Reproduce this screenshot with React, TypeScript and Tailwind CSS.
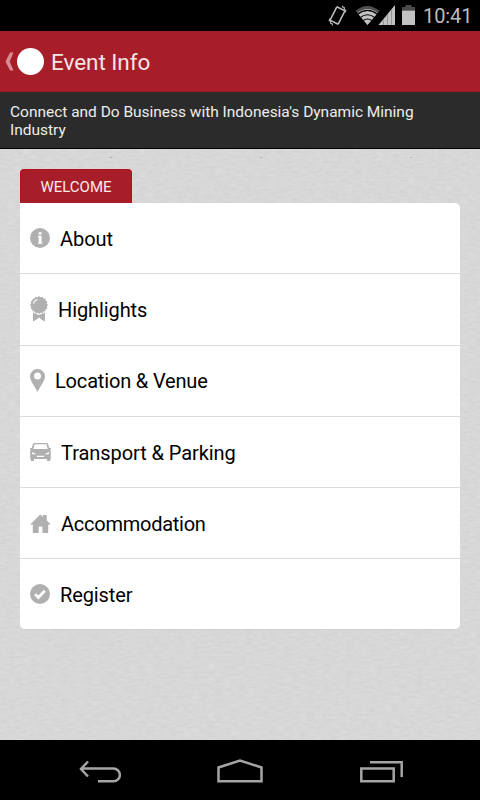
import React from 'react';

const badge = Array.from({ length: 32 }, (_, i) => {
  const a = (i * Math.PI) / 16;
  const r = i % 2 ? 7.9 : 9;
  return `${(9 + r * Math.sin(a)).toFixed(2)},${(9 - r * Math.cos(a)).toFixed(2)}`;
}).join(' ');

const InfoIcon = () => (
  <svg width="20" height="20" viewBox="0 0 20 20">
    <circle cx="10" cy="10" r="10" fill="#b0b0b0" />
    <path d="M8.600 4.200h3v2.400h-3zM8 7.700h3.600v6.800h.7v1.300H8v-1.300h.700V9H8z" fill="#fff" />
  </svg>
);
const BadgeIcon = () => (
  <svg width="18" height="26" viewBox="0 0 18 26">
    <polygon points={badge} fill="#b0b0b0" />
    <path d="M3.400 7.600A6 6 0 0 1 7.600 3.300" fill="none" stroke="#f4f4f4" strokeWidth="1.200" />
    <path d="M3 16.600 9 19l6-2.400v8.900l-2.900-1.500L9 21.500 5.900 24 3 25.500z" fill="#b0b0b0" />
  </svg>
);
const PinIcon = () => (
  <svg width="15" height="23" viewBox="0 0 15 23">
    <path fillRule="evenodd" d="M7.5 0A7.4 7.4 0 0 1 15 7.4C15 11 12 14.3 7.5 23 3 14.3 0 11 0 7.4A7.4 7.4 0 0 1 7.5 0zm0 3.600a3.500 3.500 0 1 0 0 7 3.500 3.500 0 0 0 0-7z" fill="#b0b0b0" />
  </svg>
);
const CarIcon = () => (
  <svg width="21" height="18" viewBox="0 0 21 18">
    <path fillRule="evenodd" d="M4.600 0h11.800q1.300 0 1.800 1.400L19.300 5H21v1.500h-1.100q.9 1 .9 2.400V16h-.6v2h-3.200v-2H4v2H.8v-2H.2V8.900q0-1.400.9-2.400H0V5h1.700l1.100-3.600Q3.300 0 4.600 0zM4.600 1.300 3.300 6h14.400l-1.300-4.700zM2 9.300v1.600l3.400.7v-1.200zm17 0-3.400 1.100v1.200l3.400-.7zM6.800 12.800v1.300h7.400v-1.300z" fill="#b0b0b0" />
  </svg>
);
const HomeIcon = () => (
  <svg width="21" height="19" viewBox="0 0 21 19">
    <path d="M10.300.6 13 3V.9h3.700v5.400l4 4.100h-2.500V19h-5.800v-6.500H8.700V19H2.800v-8.600H.2z" fill="#b0b0b0" />
  </svg>
);
const CheckIcon = () => (
  <svg width="20" height="20" viewBox="0 0 20 20">
    <circle cx="10" cy="10" r="10" fill="#b0b0b0" />
    <path d="m5.200 10.300 3.200 3.200 6.400-6.700" fill="none" stroke="#fff" strokeWidth="2.800" />
  </svg>
);

const rows = [
  { label: 'About', icon: <InfoIcon />, spacing: 'gap-[10px] tracking-[-0.050px]' },
  { label: 'Highlights', icon: <BadgeIcon />, spacing: 'gap-[10px] pb-[2px] tracking-[-0.100px]' },
  { label: 'Location & Venue', icon: <PinIcon />, spacing: 'gap-[10px] pb-[2px] tracking-[-0.170px]' },
  { label: 'Transport & Parking', icon: <CarIcon />, spacing: 'gap-[10px] tracking-[-0.070px]' },
  { label: 'Accommodation', icon: <HomeIcon />, spacing: 'gap-[10px] tracking-[-0.250px]' },
  { label: 'Register', icon: <CheckIcon />, spacing: 'gap-[10px] tracking-[-0.100px]' },
];

function PaperTexture() {
  return (
    <svg className="absolute inset-0 h-full w-full" aria-hidden="true">
      <filter id="paper" x="0" y="0" width="100%" height="100%" colorInterpolationFilters="sRGB">
        <feTurbulence type="fractalNoise" baseFrequency="0.13 0.4" numOctaves="3" seed="4" />
        <feColorMatrix values="0.055 0 0 0 0.817  0.055 0 0 0 0.817  0.055 0 0 0 0.817  0 0 0 0 1" />
      </filter>
      <rect width="100%" height="100%" filter="url(#paper)" />
      <path d="M110 8.500h2M260 8.500h2M410 8.500h2" stroke="#b2b2b2" strokeWidth="1" />
    </svg>
  );
}

function StatusBar() {
  return (
    <div className="flex h-[31px] shrink-0 items-center bg-black pl-[328px]">
      <svg width="92" height="31" viewBox="328 0 92 31" className="shrink-0">
        <g fill="none" stroke="#bcbcbc">
          <rect x="-4.500" y="-7.500" width="9" height="15" rx="1" transform="translate(337.500 15.500) rotate(27)" strokeWidth="1.600" />
          <path d="m330 18.500-.8 2.200 1.800.8-.5 1.700 2 .9-.2 1.300M345 12.500l.8-2.200-1.800-.8.500-1.700-2-.9.200-1.300" strokeWidth="1.100" />
        </g>
        <path d="M355.500 10.800Q367.300 1.200 379.500 10.800L367.500 25z" fill="#4d4d4d" />
        <path d="M357.400 13Q367.500 5 377.600 13L367.500 25z" fill="#c2c2c2" />
        <path d="M357.500 14.200q10-7.600 20 0M360.500 17.400q7-5.200 14 0M363.300 20.500q4.200-3 8.400 0" fill="none" stroke="#000" strokeWidth="1.100" />
        <path d="M378.500 25 395 5v20z" fill="#c2c2c2" />
        <path d="M383.500 19.500V25M387.500 14.500V25M391.500 10v15" stroke="#8a8a8a" strokeWidth="0.800" />
        <path d="M402 7h3.500V5h6v2h3.500v3.500h-13z" fill="#4a4a4a" />
        <path d="M402 10.500h13V25h-13z" fill="#c2c2c2" />
      </svg>
      <span className="ml-[3px] pt-[2px] text-[20px] leading-[31px] font-normal tracking-[-0.100px] text-[#bcbcbc]">10:41</span>
    </div>
  );
}

export default function App() {
  return (
    <div className="flex h-[800px] w-[480px] flex-col overflow-hidden bg-[#d8d8d8] font-['Roboto',sans-serif]">
      <StatusBar />
      <header className="flex h-[61px] shrink-0 items-center border-b border-[#971a24] bg-[#a71e29] pl-[5px]">
        <svg width="9" height="19" viewBox="0 0 9 19" className="shrink-0">
          <path d="M5 .5h3.500L4.700 9.500l3.800 9H5L.5 9.500z" fill="#d98c92" />
        </svg>
        <div className="ml-[3px] size-[27px] shrink-0 rounded-full bg-white" />
        <h1 className="ml-[7px] pt-[2px] text-[22.500px] leading-[30px] font-normal tracking-[-0.050px] text-[#f3e4e5]">Event Info</h1>
      </header>
      <div className="h-[57px] shrink-0 border-b border-black bg-[#2b2b2b] pt-[12px] pl-[10px] text-[15.500px] leading-[17.500px] tracking-[-0.020px] text-[#ededed]">
        Connect and Do Business with Indonesia's Dynamic Mining
        <br />
        Industry
      </div>
      <main className="relative h-[591px] shrink-0">
        <PaperTexture />
        <div className="relative px-5 pt-[20px]">
          <div className="flex h-[34px] w-[112px] items-center justify-center rounded-t-[4px] border border-b-0 border-[#b5101e] bg-[#a71e29] pt-[2px] text-[15px] text-[#f7eaeb]">
            WELCOME
          </div>
          <div className="grid h-[427px] grid-rows-[71px_72px_71px_71px_71px_70px] rounded-[5px] rounded-tl-none border-b border-[#cfcfcf] bg-white">
            {rows.map((row, i) => (
              <div
                key={row.label}
                className={`flex items-center pl-[10px] text-[20px] leading-[24px] text-black ${row.spacing} ${i < rows.length - 1 ? 'border-b border-[#dcdcdc]' : ''}`}
              >
                <span className="shrink-0">{row.icon}</span>
                <span className="pt-[2px]">{row.label}</span>
              </div>
            ))}
          </div>
        </div>
      </main>
      <nav className="flex h-[60px] shrink-0 items-center bg-black">
        <svg width="480" height="60" viewBox="0 740 480 60" fill="none" stroke="#a5a5a5" strokeWidth="2.500">
          <path d="M98 781.300h15.500a6.400 6.400 0 0 0 0-12.800H81M88 761.500l-7 7.500 7 7.500" />
          <path d="M218.500 781.300v-13.800l21.500-7 21.500 7v13.800z" />
          <path d="M361.300 768.500h32.400v12.800h-32.400zM370 762.300h31.700V777" />
        </svg>
      </nav>
    </div>
  );
}
